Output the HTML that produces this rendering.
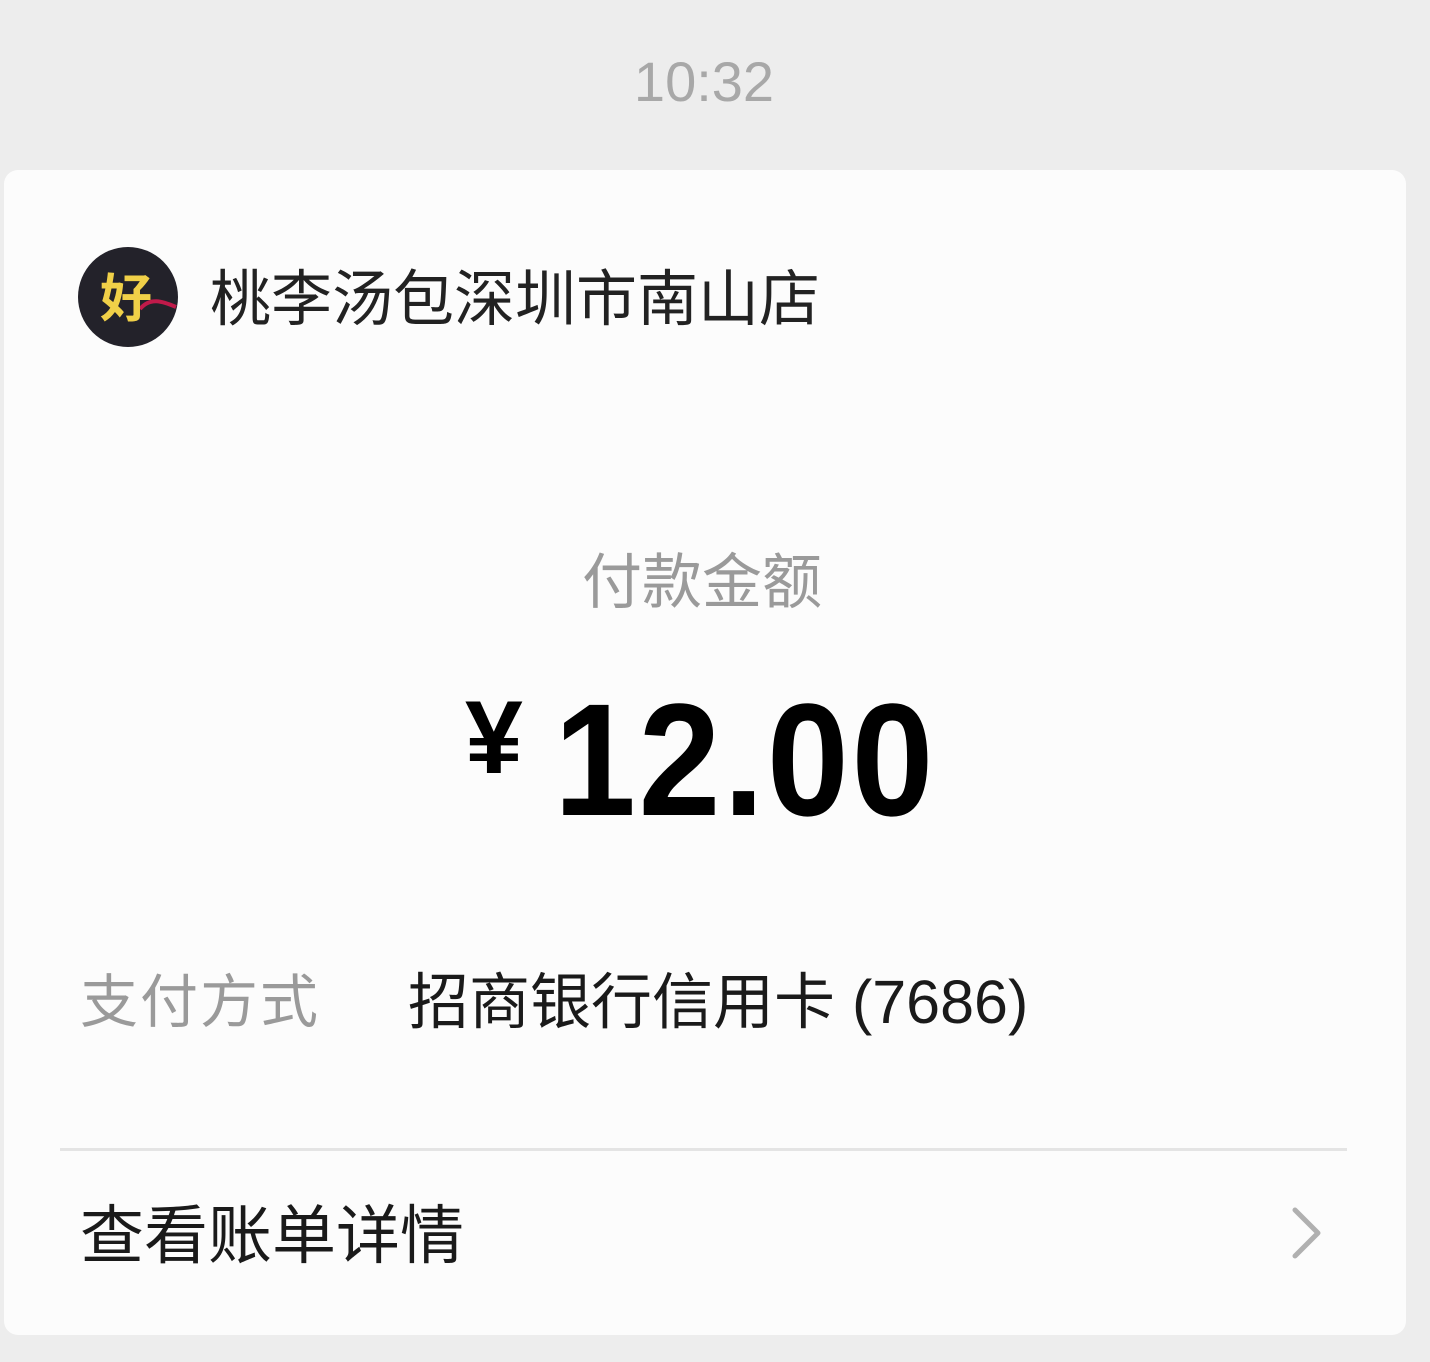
<!DOCTYPE html>
<html><head><meta charset="utf-8"><style>
body{margin:0;width:1430px;height:1362px;background:#ededed;position:relative;overflow:hidden;font-family:"Liberation Sans","Noto Sans CJK SC",sans-serif}
.t{position:absolute;white-space:nowrap;line-height:1}
.card{position:absolute;left:4px;top:170px;width:1402px;height:1165px;background:#fcfcfc;border-radius:14px}
</style></head><body>
<div class="t" style="left:0;width:1408px;text-align:center;top:54px;font-size:56px;color:#a8a8a8">10:32</div>
<div class="card"></div>
<svg style="position:absolute;left:78px;top:247px" width="100" height="100" viewBox="0 0 100 100">
<circle cx="50" cy="50" r="50" fill="#23222a"/>
<path d="M62 62 C72 50 84 54 98 60" stroke="#c01a4a" stroke-width="4" fill="none"/>
<text x="48" y="70" text-anchor="middle" font-size="52" font-weight="bold" fill="#f0d048" font-family="Noto Sans CJK SC,sans-serif">好</text>
</svg>
<div class="t" style="left:210px;top:269px;font-size:61px;color:#222">桃李汤包深圳市南山店</div>
<div class="t" style="left:0;width:1404px;text-align:center;top:553px;font-size:60px;color:#9a9a9a">付款金额</div>
<div class="t" style="left:465px;top:686px;font-size:104px;font-weight:bold;color:#000">¥</div>
<div class="t" style="left:554px;top:680px;font-size:160px;font-weight:bold;color:#000;letter-spacing:3px;transform:scaleX(0.92);transform-origin:0 0">12.00</div>
<div class="t" style="left:80px;top:974px;font-size:58px;color:#9a9a9a;letter-spacing:2px">支付方式</div>
<div class="t" style="left:408px;top:972px;font-size:61px;color:#1a1a1a">招商银行信用卡 (7686)</div>
<div style="position:absolute;left:60px;top:1148px;width:1287px;height:3px;background:#e4e4e4"></div>
<div class="t" style="left:80px;top:1204px;font-size:64px;color:#1a1a1a">查看账单详情</div>
<svg style="position:absolute;left:1285px;top:1200px" width="50" height="70" viewBox="0 0 50 70">
<path d="M10 10 L33 33 L10 56" stroke="#b0b0b0" stroke-width="5" fill="none" stroke-linecap="round" stroke-linejoin="round"/>
</svg>
</body></html>
